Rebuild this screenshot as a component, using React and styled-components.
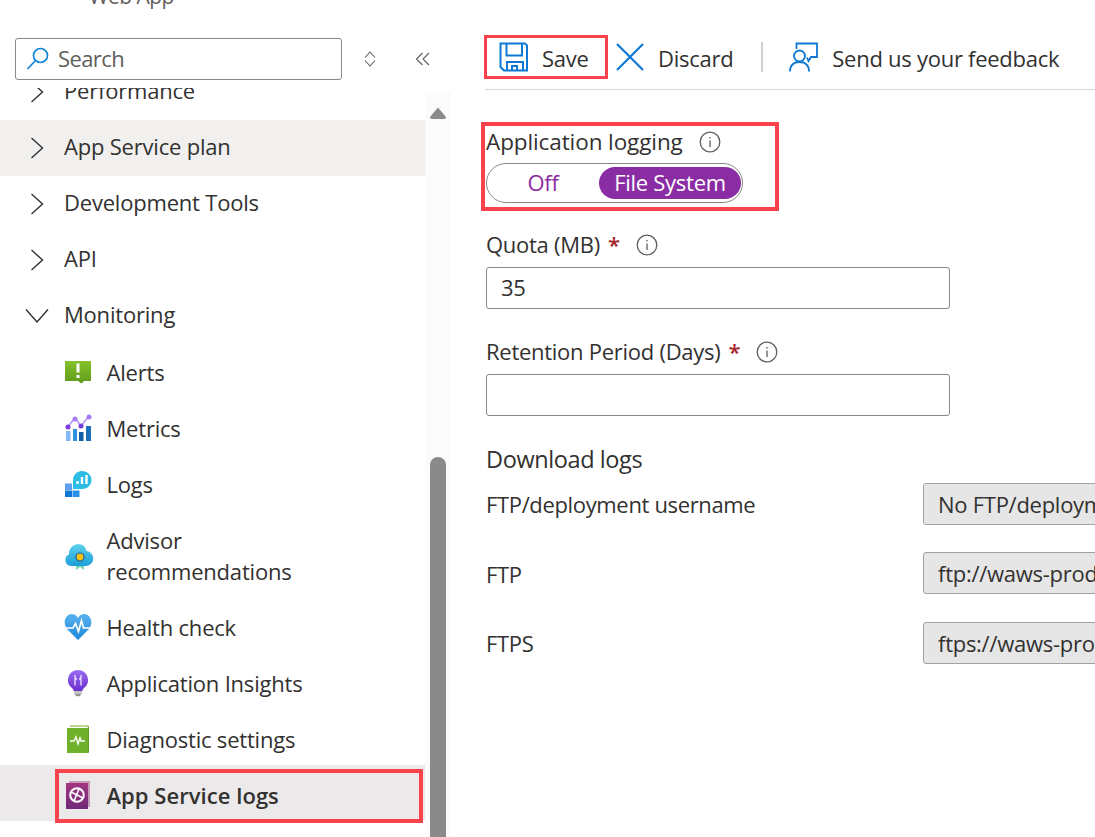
import React from 'react';
import styled, { createGlobalStyle } from 'styled-components';

const Global = createGlobalStyle`
  html, body { margin: 0; padding: 0; background: #fff; }
  body { font-family: "Open Sans", "Noto Sans", sans-serif; color: #323130; }
  * { box-sizing: border-box; }
`;
const Page = styled.div`
  width: 1095px; height: 837px; overflow: hidden; display: flex; background: #fff;
`;
const Sidebar = styled.aside`
  width: 451px; height: 837px; flex: none; display: flex; flex-direction: column; overflow: hidden;
`;
const Subtitle = styled.div`
  font-size: 21px; line-height: 28px; height: 10px; margin-top: -18px; margin-left: 89px; color: #605e5c; letter-spacing: -0.5px;
`;
const SearchRow = styled.div`
  display: flex; align-items: center; margin: 46px 0 0 15px; height: 42px;
`;
const SearchBox = styled.div`
  width: 327px; height: 42px; border: 1px solid #8a8886; border-radius: 3px; display: flex; align-items: center; padding: 0 0 2px 10px; gap: 8px;
  font-size: 22px; color: #605e5c; letter-spacing: -0.6px;
`;
const IconBtn = styled.div`
  display: flex; align-items: center; justify-content: center; margin-left: ${p => p.$ml}px; width: 24px; height: 24px;
`;
const NavArea = styled.div`
  flex: 1; display: flex; min-height: 0; margin-top: 8px; overflow: hidden;
`;
const Nav = styled.nav`
  width: 425px; flex: none; margin-top: -24px;
`;
const Row = styled.div`
  display: flex; align-items: center; height: ${p => p.$h || 56}px; background: ${p => p.$bg || 'transparent'};
  padding-left: ${p => (p.$child ? 64 : 25)}px; font-size: 22px; line-height: 31px; letter-spacing: -0.2px; color: #323130;
`;
const RowText = styled.span`
  padding-bottom: 4px;
`;
const ChevSlot = styled.span`
  width: 39px; height: 24px; display: flex; flex: none; align-items: center;
  padding-left: ${p => (p.$open ? 0 : 5)}px;
`;
const IconSlot = styled.span`
  width: 42.5px; display: flex; flex: none; align-items: center;
`;
const Pre = styled.span`white-space: pre-line;`;
const ActiveRow = styled.div`
  position: relative; height: 56px; margin-top: -2px; background: #ebe9e9; display: flex; align-items: center; padding: 4px 0 0 64px;
  font-size: 22px; font-weight: 600; letter-spacing: 0.05px; color: #323130;
`;
const RedFrame = styled.div`
  position: absolute; left: 55px; right: 2px; top: 4px; height: 54px; border: 4px solid #f9424c; pointer-events: none;
`;
const Scrollbar = styled.div`
  width: 26px; flex: none; margin-top: 5px; background: #fbfbfb; display: flex; flex-direction: column; align-items: center; padding-top: 14px;
`;
const Thumb = styled.div`
  width: 16px; flex: 1; margin-top: 338px; background: #8a8a8a; border-radius: 8px 8px 0 0;
`;
const Main = styled.main`
  flex: 1; min-width: 0; padding: 35px 0 0 33px; overflow: hidden; font-size: 22px; letter-spacing: -0.27px;
`;
const Toolbar = styled.div`
  display: flex; align-items: center; height: 44px;
`;
const SaveBtn = styled.div`
  width: 124px; height: 44px; border: 3px solid #f9424c; display: flex; align-items: center; padding-left: 12px; gap: 13px;
`;
const Tool = styled.div`
  display: flex; align-items: center; gap: ${p => p.$gap}px; margin-left: ${p => p.$ml || 0}px;
`;
const ToolText = styled.span`
  padding-top: 2px; white-space: nowrap;
`;
const VDivider = styled.div`
  width: 2px; height: 30px; background: #d2d0ce; margin-left: 28px;
`;
const HDivider = styled.div`
  height: 1px; background: #d6d6d6; margin: 10px 0 0 1px;
`;
const LoggingBox = styled.div`
  width: 298px; height: 89px; margin: 32px 0 0 -3px; border: 4px solid #f9424c; padding-left: 1px;
`;
const Label = styled.div`
  display: flex; align-items: center; height: 31px; line-height: 31px; white-space: nowrap; padding-bottom: 2px;
`;
const WideLabel = styled(Label)`
  font-size: 22.5px; letter-spacing: -0.1px; padding-bottom: 0;
`;
const Info = styled.svg`
  margin-left: ${p => p.$ml}px; flex: none;
`;
const Star = styled.span`
  color: #a4262c; margin-left: 8px; font-weight: 600;
`;
const Toggle = styled.div`
  width: 257px; height: 40px; border: 1px solid #8a8886; border-radius: 20px; display: flex; align-items: center; margin-top: 6px;
`;
const OffOpt = styled.span`
  width: 112px; text-align: center; color: #8c2aa0; line-height: 31px; height: 32px;
`;
const OnOpt = styled.span`
  width: 142px; height: 32px; line-height: 31px; border-radius: 16px; background: #8a2da5; color: #fff; text-align: center;
`;
const Field = styled.div`
  margin-top: ${p => p.$mt}px; padding-left: 2px;
`;
const Input = styled.div`
  width: 464px; height: 42px; border: 1px solid #8a8886; border-radius: 3px; margin-top: 6px; padding-left: 14px; line-height: 38px; color: #323130;
`;
const Heading = styled.div`
  font-size: 23.5px; line-height: 32px; margin: 27px 0 0 2px; letter-spacing: -0.4px;
`;
const InfoRow = styled.div`
  display: flex; align-items: center; height: 42px; margin-top: ${p => p.$mt}px; padding-left: 2px; white-space: nowrap;
`;
const InfoLabel = styled.span`
  width: 437px; flex: none; padding-top: ${p => p.$pt || 0}px; letter-spacing: -0.35px;
`;
const ReadOnly = styled.div`
  width: 400px; flex: none; height: 42px; background: #e6e6e6; border: 1px solid #a3a1a0; border-radius: 3px; padding-left: 14px; line-height: 40px;
`;

const Chev = () => (
  <svg width="14" height="22" viewBox="0 0 14 22" fill="none" stroke="#323130" strokeWidth="1.4"><path d="M1.5 1 L12.500 11 L1.500 21" /></svg>
);
const ChevDown = () => (
  <svg width="24" height="16" viewBox="0 0 24 16" fill="none" stroke="#323130" strokeWidth="1.4"><path d="M1 1.500 L12 14 L23 1.500" /></svg>
);
const InfoIcon = ({ ml }) => (
  <Info $ml={ml} width="22" height="22" viewBox="0 0 22 22" fill="none">
    <circle cx="11" cy="11" r="9.800" stroke="#605e5c" strokeWidth="1.300" />
    <path d="M11 9.500v6.500M11 6v1.500" stroke="#605e5c" strokeWidth="1.300" />
  </Info>
);
const I = { width: 30, height: 30, viewBox: '0 0 30 30' };
const Alerts = () => (
  <svg {...I}><defs><linearGradient id="ga" x1="0" y1="0" x2="0" y2="1"><stop offset="0" stopColor="#86c22a" /><stop offset="1" stopColor="#5e9b1c" /></linearGradient></defs>
    <path d="M1 4h26v20H20l-2.500 2.500L14 24H1z" fill="url(#ga)" /><rect x="12.500" y="6.500" width="3" height="9" fill="#fff" /><rect x="12.500" y="18" width="3" height="3" fill="#fff" /></svg>
);
const Metrics = () => (
  <svg {...I}>
    <rect x="2" y="18" width="4.500" height="10" fill="#83b9f9" /><rect x="9" y="16" width="4" height="12" fill="#2f8fe0" /><rect x="15" y="19" width="4.500" height="9" fill="#0f5fa8" /><rect x="22" y="13" width="5" height="15" fill="#1a6fb8" />
    <path d="M4 13.500 L11 5 L17 13 L25 3" stroke="#b796f9" strokeWidth="1.600" fill="none" />
    <circle cx="4" cy="14" r="2.500" fill="#773adc" /><circle cx="11" cy="6" r="2.500" fill="#a67af4" /><circle cx="17" cy="13" r="2.500" fill="#773adc" /><circle cx="25" cy="4" r="2.500" fill="#a67af4" />
  </svg>
);
const Logs = () => (
  <svg {...I}>
    <path d="M9 11c0-5 4-9 9-9s9.500 4 9.500 9-4 9-9.500 9H9z" fill="#2dbde4" />
    <path d="M13.500 12v3M18 8v7M22.500 6v9" stroke="#fff" strokeWidth="2.400" />
    <rect x="1" y="14.500" width="7" height="6.500" fill="#5ea0ef" /><rect x="1" y="21.500" width="7" height="6.500" fill="#0f78d4" /><rect x="8.500" y="21.500" width="7" height="6.500" fill="#2a8fe6" />
  </svg>
);
const Advisor = () => (
  <svg {...I}><defs><linearGradient id="gb" x1="0" y1="0" x2="0" y2="1"><stop offset="0" stopColor="#5ed0ef" /><stop offset="1" stopColor="#1c9fd6" /></linearGradient></defs>
    <path d="M12 29V18h8v11l-4-3z" fill="#76d6b5" />
    <path d="M7 25a6 6 0 0 1-2-11.500A9.500 9.500 0 0 1 14 3a9 9 0 0 1 8.500 7A7.500 7.500 0 0 1 21 25z" fill="url(#gb)" />
    <circle cx="16" cy="16" r="4" fill="#fbc114" stroke="#1b5fa0" strokeWidth="1.200" /></svg>
);
const Health = () => (
  <svg {...I}><defs><linearGradient id="gc" x1="0" y1="0" x2="0" y2="1"><stop offset="0" stopColor="#5ab3f0" /><stop offset="1" stopColor="#1e87d8" /></linearGradient></defs>
    <path d="M14 28L3 17C-2 10 2 2 7.500 2c3 0 5 1.500 6.500 4 1.500-2.500 3.500-4 6.500-4C26 2 30 10 25 17z" fill="url(#gc)" />
    <path d="M1 16h8l2.500-4.500 3 8 3-11 2 7.500h7" stroke="#fff" strokeWidth="1.700" fill="none" /></svg>
);
const Insights = () => (
  <svg {...I}><defs><linearGradient id="gd" x1="0" y1="0" x2="0" y2="1"><stop offset="0" stopColor="#9a6cf0" /><stop offset="1" stopColor="#6a2fd0" /></linearGradient></defs>
    <path d="M14 2a10 10 0 0 0-6 18c1 1 1.500 1.500 1.500 3h9c0-1.500.5-2 1.500-3a10 10 0 0 0-6-18z" fill="url(#gd)" />
    <rect x="10" y="23" width="8" height="3.500" rx="1" fill="#c4c4c4" /><rect x="11.500" y="26" width="5" height="2.200" fill="#8f8f8f" />
    <path d="M11 7v2a2 2 0 0 0 2 2M17 7v2a2 2 0 0 1-2 2M11 10.500v7M17 10.500v7" stroke="#f3e9ff" strokeWidth="1.300" fill="none" /></svg>
);
const Diag = () => (
  <svg {...I}>
    <path d="M6 1h19v26h-1.500V3H6z" fill="#b7d98b" /><path d="M3 4h21.500v25H3z" fill="#6fb12a" /><path d="M24 3h1v25l-1 1z" fill="#5e9b1c" />
    <path d="M6 17h4l2-4 2 7 2-6 1 3h4" stroke="#fff" strokeWidth="1.400" fill="none" /></svg>
);
const AppLogs = () => (
  <svg {...I}><defs><linearGradient id="ge" x1="0" y1="0" x2="0" y2="1"><stop offset="0" stopColor="#a3357f" /><stop offset="1" stopColor="#6e2a79" /></linearGradient></defs>
    <path d="M5 1h21v26h-2V3H5z" fill="#c69ab9" /><rect x="2" y="3" width="22" height="26" fill="url(#ge)" />
    <circle cx="13" cy="15" r="6.800" fill="none" stroke="#fff" strokeWidth="2" />
    <path d="M7 12l12 6M10 21l5-12" stroke="#fff" strokeWidth="1.600" /></svg>
);
const children = [
  ['Alerts', Alerts], ['Metrics', Metrics], ['Logs', Logs], ['Advisor\nrecommendations', Advisor, 87],
  ['Health check', Health], ['Application Insights', Insights], ['Diagnostic settings', Diag],
];
const groups = [
  ['Performance'], ['App Service plan', '#f1f0ef'], ['Development Tools'], ['API'],
];

export default function App() {
  return (
    <Page>
      <Global />
      <Sidebar>
        <Subtitle>Web App</Subtitle>
        <SearchRow>
          <SearchBox>
            <svg width="24" height="24" viewBox="0 0 24 24" fill="none" stroke="#0f84dc" strokeWidth="1.700"><circle cx="14.500" cy="9.500" r="7" /><path d="M9.500 14.500 L1.500 23" /></svg>
            Search
          </SearchBox>
          <IconBtn $ml={16}><svg width="12" height="16" viewBox="0 0 12 16" fill="none" stroke="#605e5c" strokeWidth="1.100"><path d="M1 6.500 L6 1 L11 6.500M1 9.500 L6 15 L11 9.500" /></svg></IconBtn>
          <IconBtn $ml={29}><svg width="16" height="14" viewBox="0 0 16 14" fill="none" stroke="#605e5c" strokeWidth="1.100"><path d="M7.500 1 L1.500 7 L7.500 13M14 1 L8 7 L14 13" /></svg></IconBtn>
        </SearchRow>
        <NavArea>
          <Nav>
            {groups.map(([t, bg]) => (
              <Row key={t} $bg={bg}><ChevSlot><Chev /></ChevSlot><RowText>{t}</RowText></Row>
            ))}
            <Row><ChevSlot $open><ChevDown /></ChevSlot><RowText>Monitoring</RowText></Row>
            {children.map(([t, Ic, h]) => (
              <Row key={t} $child $h={h}><IconSlot><Ic /></IconSlot><Pre>{t}</Pre></Row>
            ))}
            <ActiveRow>
              <IconSlot><AppLogs /></IconSlot>App Service logs
              <RedFrame />
            </ActiveRow>
          </Nav>
          <Scrollbar>
            <svg width="16" height="12" viewBox="0 0 16 12"><path d="M8 0.500 L16 10 Q16 12 14 12 H2 Q0 12 0 10 Z" fill="#8a8a8a" /></svg>
            <Thumb />
          </Scrollbar>
        </NavArea>
      </Sidebar>
      <Main>
        <Toolbar>
          <SaveBtn>
            <svg width="30" height="30" viewBox="0 0 30 30" fill="none" stroke="#0f78d4" strokeWidth="2"><path d="M1.500 1.500H26L28 3.500V28.500H5L1.500 25z" /><path d="M7.500 1.500V13.500H23V1.500M8 28.500V20H24V28.500M13 28.500V24H18V28.500" /></svg>
            <ToolText>Save</ToolText>
          </SaveBtn>
          <Tool $ml={7} $gap={13}>
            <svg width="30" height="30" viewBox="0 0 30 30" fill="none" stroke="#0f78d4" strokeWidth="2.200"><path d="M2 2 L28 28M28 2 L2 28" /></svg>
            <ToolText>Discard</ToolText>
          </Tool>
          <VDivider />
          <Tool $ml={26} $gap={13}>
            <svg width="30" height="30" viewBox="0 0 30 30" fill="none" stroke="#0f78d4" strokeWidth="1.800"><path d="M7.500 7V1.500H28V15H22L19.500 19 18 15.500" /><circle cx="10.500" cy="14" r="5.500" /><path d="M1 29.500c0-7 4-9.500 9.500-9.500s9.500 2.500 9.500 9.500" /></svg>
            <ToolText>Send us your feedback</ToolText>
          </Tool>
        </Toolbar>
        <HDivider />
        <LoggingBox>
          <WideLabel>Application logging<InfoIcon ml={16} /></WideLabel>
          <Toggle><OffOpt>Off</OffOpt><OnOpt>File System</OnOpt></Toggle>
        </LoggingBox>
        <Field $mt={19}>
          <Label>Quota (MB)<Star>*</Star><InfoIcon ml={16} /></Label>
          <Input>35</Input>
        </Field>
        <Field $mt={28}>
          <Label>Retention Period (Days)<Star>*</Star><InfoIcon ml={16} /></Label>
          <Input />
        </Field>
        <Heading>Download logs</Heading>
        <InfoRow $mt={8}><InfoLabel>FTP/deployment username</InfoLabel><ReadOnly>No FTP/deployment user set</ReadOnly></InfoRow>
        <InfoRow $mt={27}><InfoLabel $pt={2}>FTP</InfoLabel><ReadOnly>ftp://waws-prod-sn1-001</ReadOnly></InfoRow>
        <InfoRow $mt={28}><InfoLabel>FTPS</InfoLabel><ReadOnly>ftps://waws-prod-sn1-001</ReadOnly></InfoRow>
      </Main>
    </Page>
  );
}
